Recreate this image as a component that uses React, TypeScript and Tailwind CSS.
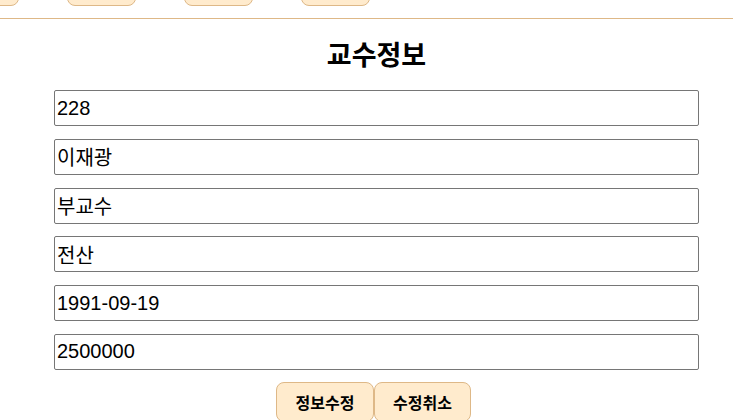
import React from "react";

const fields = ["228", "이재광", "부교수", "전산", "1991-09-19", "2500000"];
const navItems = ["", "", "", ""];

export default function App() {
  return (
    <div className="min-h-[420px] bg-white overflow-hidden" style={{ fontFamily: '"Liberation Sans", "Noto Sans CJK KR", sans-serif' }}>
      <div className="border-b border-[#deb887] pb-[12px]">
        <div className="flex gap-[48px] ml-[-50px] mt-[-32px]">
          {navItems.map((n, i) => (
            <button key={i} className="w-[69px] h-[38px] shrink-0 rounded-[8px] bg-[#ffebcd] border border-[#deb887]">{n}</button>
          ))}
        </div>
      </div>
      <div className="w-[645px] ml-[54px] flex flex-col items-center">
        <h2 className="mt-[19px] mb-[20px] text-[27px] leading-[32px] font-bold text-black" style={{ fontFamily: '"Noto Sans CJK KR", sans-serif' }}>교수정보</h2>
        <div className="w-full flex flex-col gap-[12.8px]">
          {fields.map((f) => (
            <input
              key={f}
              defaultValue={f}
              className="w-full h-[36px] px-[2px] border border-[#767676] rounded-[2px] text-[20px] text-black outline-none"
            />
          ))}
        </div>
        <div className="flex mt-[12px] mr-[6px]">
          <button className="w-[98px] h-[40px] rounded-[8px] bg-[#ffebcd] border border-[#deb887] text-[16px] font-bold text-black" style={{ fontFamily: '"Noto Sans CJK KR", sans-serif' }}>정보수정</button>
          <button className="w-[97px] h-[40px] rounded-[8px] bg-[#ffebcd] border border-[#deb887] text-[16px] font-bold text-black" style={{ fontFamily: '"Noto Sans CJK KR", sans-serif' }}>수정취소</button>
        </div>
      </div>
    </div>
  );
}
